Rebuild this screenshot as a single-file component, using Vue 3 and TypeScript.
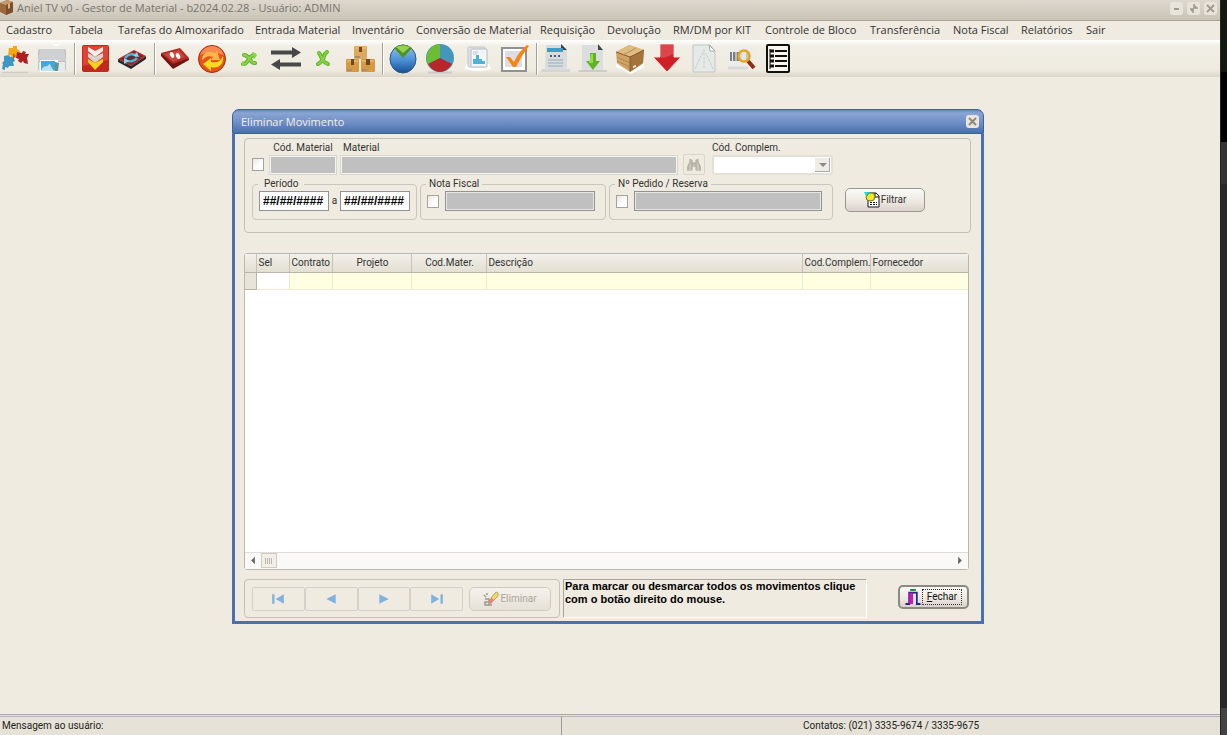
<script setup lang="ts">
import { ref } from 'vue'

interface Column {
  title: string
  width: number | null
  center: boolean
}

const menuItems: string[] = [
  'Cadastro', 'Tabela', 'Tarefas do Almoxarifado', 'Entrada Material', 'Inventário',
  'Conversão de Material', 'Requisição', 'Devolução', 'RM/DM por KIT', 'Controle de Bloco',
  'Transferência', 'Nota Fiscal', 'Relatórios', 'Sair',
]

const columns: Column[] = [
  { title: 'Sel', width: 33, center: false },
  { title: 'Contrato', width: 43, center: false },
  { title: 'Projeto', width: 79, center: true },
  { title: 'Cod.Mater.', width: 75, center: true },
  { title: 'Descrição', width: null, center: false },
  { title: 'Cod.Complem.', width: 68, center: false },
  { title: 'Fornecedor', width: 98, center: false },
]

const dateFrom = ref('##/##/####')
const dateTo = ref('##/##/####')
const useMaterial = ref(false)
const useInvoice = ref(false)
const useOrder = ref(false)
</script>

<template>
  <div class="screen">
    <div class="window">
      <header class="titlebar">
        <svg class="app-icon" viewBox="0 0 14 16" aria-hidden="true">
          <path d="M0 3 7 0 13 2 13 12 6 15 0 12Z" fill="#9a6a3c" />
          <path d="M0 3 7 0 13 2 6 5Z" fill="#c79a68" />
          <path d="M6 5 13 2V12L6 15Z" fill="#7d4f28" />
          <path d="M8 4 10 3V8L8 9Z" fill="#d8b48a" />
        </svg>
        <h1>Aniel TV v0 - Gestor de Material - b2024.02.28 - Usuário: ADMIN</h1>
        <div class="window-buttons">
          <button type="button" aria-label="Minimizar"><svg viewBox="0 0 13 13"><path d="M4 7h5" stroke="#a09a8c" stroke-width="2" /></svg></button>
          <button type="button" aria-label="Restaurar"><svg viewBox="0 0 13 13"><path d="M7 2v4h4M3 7h3v4M7 6l2-2M6 7l-2 2" fill="none" stroke="#a09a8c" stroke-width="1.6" /></svg></button>
          <button type="button" aria-label="Fechar janela"><svg viewBox="0 0 13 13"><path d="M3 3l7 7M10 3l-7 7" stroke="#a09a8c" stroke-width="1.8" /></svg></button>
        </div>
      </header>

      <nav class="menubar" aria-label="Menu principal">
        <button v-for="item in menuItems" :key="item" type="button">{{ item }}</button>
      </nav>

      <div class="toolbar" role="toolbar" aria-label="Ferramentas">
        <button type="button" aria-label="Cadastro">
          <svg viewBox="0 0 30 30">
            <path d="M2 28.500h26" stroke="#cfcdc8" stroke-width="1.500" />
            <path d="M4 12 9 11l1 2 3-1 2 5-2 1 1 4-5 0-1 2-3-1 0 3-3-1 1-5-1-1 2-2Z" fill="#3d97c4" />
            <path d="M9 4l4 0 0-2 4 0 0 3 3 2-1 4-2-1-1 4-4-1-1-2-3 1Z" fill="#f3a712" />
            <path d="M17 8l5 1 1-2 3 1-1 2 4 0-2 4 1 6-4-1-1-2-2 2-3-2 1-2-3-1Z" fill="#ad1f22" />
            <path d="M13 9l3 3-3 3" fill="#c4601a" />
          </svg>
        </button>
        <button type="button" aria-label="Imagens">
          <svg viewBox="0 0 30 30">
            <rect x="1" y="5" width="28" height="22" rx="2" fill="#bfc0c3" />
            <path d="M3 5h24l2 12H1Z" fill="#cfd0d3" />
            <path d="M17 0h5v2h-6Z" fill="#fff" />
            <rect x="2" y="18" width="26" height="10" fill="#e9eaeb" />
            <rect x="3" y="16" width="18" height="12" fill="#fff" />
            <rect x="4" y="17" width="14" height="10" fill="#48a6da" />
            <path d="M4 27c3-8 6-2 8-7 2 0 2 5 6 7Z" fill="#b9e2f4" />
            <path d="M18 18l4 1-1 8-3 0Z" fill="#5c9b86" />
          </svg>
        </button>
        <span class="separator"></span>
        <button type="button" aria-label="Entrada">
          <svg viewBox="0 0 30 30">
            <rect x="2" y="1" width="27" height="27" rx="2" fill="#c3281f" />
            <path d="M3 2h25v14L3 22Z" fill="#dc4436" />
            <path d="M8 3l7 4 8-4v4l-8 6-7-6Z" fill="#f1efed" />
            <path d="M8 9l7 4 8-4v4l-8 6-7-6Z" fill="#d9d4d0" />
            <path d="M8 15l7 4 8-4v3l-8 8-7-8Z" fill="#f6d21c" />
          </svg>
        </button>
        <button type="button" aria-label="Atualizar livro">
          <svg viewBox="0 0 30 30">
            <path d="M1 15 17 6 29 12 14 22Z" fill="#b32320" />
            <path d="M1 15 14 22 29 12 29 15 14 25 1 18Z" fill="#26282c" />
            <path d="M4 15 17 8 25 12 14 20Z" fill="#5b2f38" />
            <path d="M8 14c3-4 8-5 12-2M20 14c-3 4-8 4-12 2" fill="none" stroke="#54b5d8" stroke-width="2.500" />
            <path d="M20 8l2 5-6-1ZM7 20l0-6 5 3Z" fill="#8fd3e8" />
          </svg>
        </button>
        <span class="separator"></span>
        <button type="button" aria-label="Livro">
          <svg viewBox="0 0 30 30">
            <path d="M1 9 20 4 29 14 13 22Z" fill="#b32c24" />
            <path d="M1 9 13 20 29 14v2L13 25 1 12Z" fill="#741514" />
            <path d="M4 10 19 6 25 13 13 18Z" fill="#c7473d" />
            <ellipse cx="12" cy="11" rx="2" ry="3" fill="#fff" transform="rotate(-25 12 11)" />
            <ellipse cx="18" cy="12" rx="2" ry="3" fill="#fff" transform="rotate(-25 18 12)" />
          </svg>
        </button>
        <button type="button" aria-label="Atualizar">
          <svg viewBox="0 0 30 30">
            <circle cx="15" cy="15" r="13.500" fill="#ea5318" stroke="#9f2a12" />
            <path d="M3 11a12.500 12.500 0 0 1 24 0Q15 6 3 11Z" fill="#f88a50" />
            <path d="M5 16C5 9 12 6 18 9l2-2 3 9-9 0 2-3c-5-2-7 0-11 3Z" fill="#ffb648" />
            <path d="M26 12c1 9-5 13-12 11v4l-8-7 8-6v4c6 1 9 0 12-6Z" fill="#ffda22" />
          </svg>
        </button>
        <button type="button" aria-label="Converter">
          <svg viewBox="0 0 30 30" fill="none" stroke-linecap="round" stroke-linejoin="round">
            <path d="M10 11c6 0 6 9 11 8M9 20c5 1 6-9 11-9" stroke="#5eb32a" stroke-width="4" />
            <path d="M10 11c6 0 6 9 11 8M9 20c5 1 6-9 11-9M19 9l3 2-2 3M9 18v3" stroke="#8ad548" stroke-width="2" />
          </svg>
        </button>
        <button type="button" aria-label="Transferir">
          <svg viewBox="0 0 30 30">
            <path d="M0 6.500h21V3l9 5.500-9 5.500v-3.500H0Z" fill="#48484a" />
            <path d="M30 18.500H9V15l-9 5.500L9 26v-3.500h21Z" fill="#48484a" />
          </svg>
        </button>
        <button type="button" aria-label="Cancelar">
          <svg viewBox="0 0 30 30" fill="none" stroke-linecap="round" stroke-linejoin="round">
            <path d="M11 9c4 4 0 7 9 11M19 8c-5 3-1 8-9 12" stroke="#5eb32a" stroke-width="4" />
            <path d="M11 9c4 4 0 7 9 11M19 8c-5 3-1 8-9 12" stroke="#86d43e" stroke-width="2" />
          </svg>
        </button>
        <button type="button" aria-label="Inventário">
          <svg viewBox="0 0 30 30">
            <rect x="9" y="2" width="13" height="13" rx="1" fill="#dda95c" />
            <rect x="1" y="15" width="13" height="13" rx="1" fill="#d69a45" />
            <rect x="16" y="15" width="14" height="13" rx="1" fill="#d69a45" />
            <path d="M10 4h11M2 17h11M17 17h12" stroke="#edc98c" />
            <path d="M14 3h3v5h-3ZM6 15h3v6H6ZM21 15h4v6h-4Z" fill="#704823" />
            <path d="M10 13h5M2 26h5M17 26h5" stroke="#a98e6d" stroke-width="2" />
          </svg>
        </button>
        <span class="separator"></span>
        <button type="button" aria-label="Gráfico">
          <svg viewBox="0 0 30 30">
            <defs><linearGradient id="blueDisc" x1="0" x2="0" y1="0" y2="1"><stop stop-color="#8fc6f2" /><stop offset=".55" stop-color="#4a8fd4" /><stop offset="1" stop-color="#164f94" /></linearGradient></defs>
            <ellipse cx="15" cy="15" rx="13" ry="14" fill="url(#blueDisc)" stroke="#2a5583" />
            <path d="M6 4Q15-3 24 4L15 14Z" fill="#4f9420" />
            <path d="M8 3Q15 0 22 3L15 9Z" fill="#96d154" />
          </svg>
        </button>
        <button type="button" aria-label="Relatório gráfico">
          <svg viewBox="0 0 30 30">
            <path d="M3 28.500h24" stroke="#c9c9c9" stroke-width="2" />
            <circle cx="15" cy="14" r="14" fill="#4596bb" />
            <path d="M15 14V0A14 14 0 0 0 3 20Z" fill="#6cbd33" />
            <path d="M15 14 3 20Q8 28 15 28 23 27 27 20Z" fill="#b9262a" />
          </svg>
        </button>
        <button type="button" aria-label="Documentos">
          <svg viewBox="0 0 30 30">
            <path d="M4 20 27 20 29 25Q15 29 3 25Z" fill="#fff" />
            <rect x="6" y="3" width="17" height="20" rx="1" fill="#dfe2e4" stroke="#c3c8cb" />
            <rect x="9" y="5" width="16" height="18" rx="1" fill="#f2f5f6" stroke="#b7bec2" />
            <path d="M11 8h5M11 10h4" stroke="#c1c9cc" />
            <path d="M11 18v-3h3v-4h3v4h3v2h3v3H11Z" fill="#50b2d6" />
          </svg>
        </button>
        <button type="button" aria-label="Confirmar">
          <svg viewBox="0 0 30 30">
            <rect x="3" y="4" width="24" height="23" fill="#fff" stroke="#8f9194" stroke-width="2" />
            <rect x="6" y="7" width="17" height="16" fill="#dcdde5" />
            <path d="M7 13l4 0 4 5Q20 7 28 1l2 1Q22 12 17 23h-3Z" fill="#f58612" />
          </svg>
        </button>
        <span class="separator wide"></span>
        <button type="button" aria-label="Requisição">
          <svg viewBox="0 0 30 30">
            <path d="M1 25h28v3H0Z" fill="#d5d5d4" />
            <path d="M5 1h16l5 5v20H4Z" fill="#d9dcdf" />
            <path d="M20 0l6 6h-6Z" fill="#3d4249" />
            <path d="M6 4h16v4H6Z" fill="#3f9dc5" />
            <path d="M9 12h12" stroke="#4b5c6e" stroke-width="2" stroke-dasharray="2 2" />
            <path d="M7 16h15M7 19h15M7 22h15" stroke="#98abb9" />
          </svg>
        </button>
        <button type="button" aria-label="Baixar documento">
          <svg viewBox="0 0 30 30">
            <path d="M1 26h28v2H0Z" fill="#ccc" />
            <path d="M4 1h16l5 5v20H4Z" fill="#dcddde" />
            <path d="M20 0l5 6h-5Z" fill="#42474c" />
            <path d="M12 9h6v8h4l-7 9-7-9h4Z" fill="#5fb51f" />
            <path d="M13 10h2v9h-4" fill="#98d94f" />
          </svg>
        </button>
        <button type="button" aria-label="Caixa">
          <svg viewBox="0 0 30 30">
            <path d="M1 20 15 28 29 20v3L16 30 1 23Z" fill="#fff" />
            <path d="M1 8 14 1 29 6 28 19 15 28 2 19Z" fill="#d0a266" />
            <path d="M1 8 14 1 29 6 15 13Z" fill="#e0bb80" />
            <path d="M15 13 29 6 28 19 15 28Z" fill="#a4743c" />
            <path d="M1 8 15 13 29 6M15 13v14" fill="none" stroke="#815a30" />
            <path d="M2 13 15 19 28 12M2 17 15 23 28 16" fill="none" stroke="#9c7343" stroke-width=".6" />
            <path d="M8 11 21 4" stroke="#b88a50" />
            <path d="M18 22l3-1v2l-3 1Z" fill="#eee6d8" />
          </svg>
        </button>
        <button type="button" aria-label="Baixar">
          <svg viewBox="0 0 30 30">
            <path d="M8 0h14v13h7L15 28 1 13h7Z" fill="#cf1f27" stroke="#f6e3dd" />
            <path d="M9 1h12v9Q14 14 9 14Z" fill="#dc4549" />
          </svg>
        </button>
        <button type="button" aria-label="Novo documento">
          <svg viewBox="0 0 30 30">
            <path d="M4 1h17l5 6v21H4Z" fill="#e5e9e7" stroke="#c0c7c3" />
            <path d="M20 1l1 6h5Z" fill="#fff" stroke="#a5ada9" />
            <path d="M6 25 14 8M24 25 17 9M15 5v20" stroke="#c9d0cc" stroke-dasharray="3 1" />
          </svg>
        </button>
        <button type="button" aria-label="Consultar código">
          <svg viewBox="0 0 30 30">
            <rect x="2" y="4" width="25" height="18" fill="#ececeb" />
            <path d="M5 8v9M8 8v9M12 8v9M21 8v9" stroke="#7b7e81" stroke-width="2" />
            <path d="M10 8v9M15 8v9" stroke="#8a8d90" />
            <path d="M2 24h20" stroke="#dadada" stroke-width="3" />
            <path d="M22 17l6 7" stroke="#8b3014" stroke-width="4" />
            <circle cx="18" cy="12" r="5.500" fill="#e4e6df" fill-opacity=".7" stroke="#e6a421" stroke-width="2.500" />
          </svg>
        </button>
        <button type="button" aria-label="Lista">
          <svg viewBox="0 0 30 30">
            <rect x="4" y="1" width="22" height="27" rx="1" fill="#f7f5ee" stroke="#101010" stroke-width="2" />
            <path d="M7 5v20" stroke="#111" />
            <path d="M12 7h12M12 12h12M12 17h12M12 22h12" stroke="#111" stroke-width="2" />
            <path d="M7 7h4M7 12h4M7 17h4M7 22h4" stroke="#111" stroke-width="3" />
          </svg>
        </button>
      </div>

      <main class="workspace">
        <section class="dialog" role="dialog" aria-labelledby="dialog-title">
          <header class="dialog-title">
            <h2 id="dialog-title">Eliminar Movimento</h2>
            <button type="button" aria-label="Fechar diálogo"><svg viewBox="0 0 13 13"><path d="M3 3l7 7M10 3l-7 7" stroke="#8f8a7e" stroke-width="2" /></svg></button>
          </header>

          <div class="dialog-body">
            <form class="filters" @submit.prevent>
              <div class="filter-row">
                <input v-model="useMaterial" type="checkbox" aria-label="Filtrar por material">
                <div class="field code">
                  <label for="code">Cód. Material</label>
                  <input id="code" type="text" class="soft" disabled>
                </div>
                <div class="field material">
                  <label for="material">Material</label>
                  <input id="material" type="text" class="soft" disabled>
                </div>
                <button type="button" class="search" disabled aria-label="Procurar">
                  <svg viewBox="0 0 16 14">
                    <path d="M4 1h2v3h4V1h2v3l3 5v4h-5V9H6v4H1V9l3-5Z" fill="#c9c5b9" />
                    <path d="M4 1v3L2 8v4M6 2v10M10 2v10M12 1v3l2 4v4M6 6h4" fill="none" stroke="#a9a598" />
                  </svg>
                </button>
                <div class="field complement">
                  <label for="complement">Cód. Complem.</label>
                  <div class="combo">
                    <select id="complement" disabled><option value=""></option></select>
                    <span class="combo-arrow"></span>
                  </div>
                </div>
              </div>

              <div class="filter-row groups">
                <fieldset class="period">
                  <legend>Período</legend>
                  <div class="group-line">
                    <input v-model="dateFrom" type="text" class="date" aria-label="Data inicial">
                    <span>a</span>
                    <input v-model="dateTo" type="text" class="date" aria-label="Data final">
                  </div>
                </fieldset>
                <fieldset class="invoice">
                  <legend>Nota Fiscal</legend>
                  <div class="group-line checked">
                    <input v-model="useInvoice" type="checkbox" aria-label="Filtrar por nota fiscal">
                    <input type="text" disabled aria-label="Nota Fiscal">
                  </div>
                </fieldset>
                <fieldset class="order">
                  <legend>Nº Pedido / Reserva</legend>
                  <div class="group-line checked">
                    <input v-model="useOrder" type="checkbox" aria-label="Filtrar por pedido">
                    <input type="text" disabled aria-label="Nº Pedido / Reserva">
                  </div>
                </fieldset>
                <button type="submit" class="push filter">
                  <svg viewBox="0 0 16 16">
                    <path d="M4 1h8l3 3v11H4Z" fill="#fff" stroke="#111" />
                    <path d="M11 1v4h4" fill="none" stroke="#111" />
                    <path d="M0 0h6v3L3 6Z" fill="#14dfe6" />
                    <path d="M2 5 5 1h4l2 3-1 4-4 1-3-1Z" fill="#f0e928" stroke="#77731c" />
                    <path d="M6 10.500h7M6 12.500h7" stroke="#111" stroke-dasharray="2 1" />
                  </svg>
                  <span>Filtrar</span>
                </button>
              </div>
            </form>

            <div class="data-grid">
              <table>
                <colgroup>
                  <col class="indicator">
                  <col v-for="column in columns" :key="column.title" :style="{ width: column.width ? column.width + 'px' : 'auto' }">
                </colgroup>
                <thead>
                  <tr>
                    <th aria-label="Linha"></th>
                    <th v-for="column in columns" :key="column.title" :class="{ center: column.center }">{{ column.title }}</th>
                  </tr>
                </thead>
                <tbody>
                  <tr>
                    <td></td>
                    <td v-for="column in columns" :key="column.title"></td>
                  </tr>
                </tbody>
              </table>
              <div class="rows-area"></div>
              <div class="scrollbar">
                <button type="button" aria-label="Rolar para a esquerda"><svg viewBox="0 0 16 16"><path d="M10 4v8L6 8Z" fill="#666" /></svg></button>
                <span class="thumb"></span>
                <button type="button" class="right" aria-label="Rolar para a direita"><svg viewBox="0 0 16 16"><path d="M6 4v8l4-4Z" fill="#666" /></svg></button>
              </div>
            </div>

            <footer class="actions">
              <div class="nav-panel">
                <div class="navigator">
                  <button type="button" disabled aria-label="Primeiro"><svg viewBox="0 0 12 10"><path d="M1 1h2v8H1ZM11 1v8L4 5Z" /></svg></button>
                  <button type="button" disabled aria-label="Anterior"><svg viewBox="0 0 12 10"><path d="M10 1v8L2 5Z" /></svg></button>
                  <button type="button" disabled aria-label="Próximo"><svg viewBox="0 0 12 10"><path d="M2 1v8l8-4Z" /></svg></button>
                  <button type="button" disabled aria-label="Último"><svg viewBox="0 0 12 10"><path d="M9 1h2v8H9ZM1 1v8l7-4Z" /></svg></button>
                </div>
                <button type="button" class="push delete" disabled>
                  <svg viewBox="0 0 16 16">
                    <path d="M2 8h4v6M6 11H2v3h7M1 4l2 2M4 2v2" fill="none" stroke="#8b877d" stroke-width="1.500" />
                    <path d="M8 7 13 1l2 1v3l-5 5Z" fill="#f1d83e" stroke="#a79854" />
                    <path d="M6 9l3-2 2 2-3 4-2-1Z" fill="#e96a63" />
                  </svg>
                  <span>Eliminar</span>
                </button>
              </div>
              <p class="hint">Para marcar ou desmarcar todos os movimentos clique com o botão direito do mouse.</p>
              <button type="button" class="push close">
                <svg viewBox="0 0 16 17">
                  <path d="M5 0h6v2H5Z" fill="#148a24" />
                  <path d="M0 16h4V4h8v12h4" fill="none" stroke="#24248c" stroke-width="2" />
                  <path d="M4 4h4v12H4Z" fill="#d813b8" />
                  <path d="M9 5h2v11H9Z" fill="#c9f8fb" />
                </svg>
                <span><u>F</u>echar</span>
              </button>
            </footer>
          </div>
        </section>
      </main>

      <footer class="statusbar">
        <span>Mensagem ao usuário:</span>
        <span>Contatos: (021) 3335-9674 / 3335-9675</span>
      </footer>
    </div>
    <aside class="desktop-edge" aria-hidden="true"></aside>
  </div>
</template>

<style>
html, body { margin: 0; background: #efebe0; }
</style>

<style scoped>
* { box-sizing: border-box; }
button, input, select { margin: 0; padding: 0; font: inherit; color: inherit; border: 0; background: none; border-radius: 0; }
svg { display: block; }

.screen {
  display: flex;
  min-height: 100vh;
  font-family: "Roboto", "Liberation Sans", sans-serif;
  font-size: 10px;
  line-height: 14px;
  color: #333;
}
.window { flex: 1; min-width: 0; display: flex; flex-direction: column; background: #efebe0; }
.desktop-edge {
  width: 7px;
  background: linear-gradient(#121810 72px, #000 72px, #000 142px, #333 142px, #333 184px, #282828 184px, #282828 calc(100% - 27px), #434343 calc(100% - 27px));
  border-left: 1px solid #22241f;
}

.titlebar {
  display: flex;
  align-items: center;
  height: 21px;
  padding-bottom: 4px;
  background: linear-gradient(#ded8ce, #c9c4b7);
  border-bottom: 1px solid #aaa598;
}
.app-icon { width: 14px; height: 16px; margin-right: 3px; }
h1, h2 { margin: 0; font-family: "Open Sans", "Noto Sans", sans-serif; font-size: 11px; font-weight: 400; line-height: 16px; }
h1 { color: #77746e; }
.window-buttons { display: flex; gap: 4px; margin-left: auto; margin-right: 3px; }
.window-buttons button { width: 13px; height: 13px; background: #e8e4dc; border-radius: 3px; }

.menubar {
  display: grid;
  grid-template-columns: 63px 49px 137px 97px 64px 124px 67px 66px 92px 105px 83px 68px 65px auto;
  height: 19px;
  padding: 0 0 2px 6px;
  font-family: "Open Sans", "Noto Sans", sans-serif;
  font-size: 11px;
}
.menubar button { text-align: left; white-space: nowrap; }

.toolbar {
  display: flex;
  align-items: flex-start;
  height: 37px;
  padding-top: 4px;
  background: linear-gradient(#fff, #f1eee5 6px, #efebe0 30px, #dcd6ca 37px);
}
.toolbar button { flex: none; width: 30px; height: 30px; margin-right: 7px; }
.separator { flex: none; width: 2px; height: 32px; margin-right: 4px; margin-top: -1px; border-left: 1px solid #a3a099; border-right: 1px solid #fff; }
.separator.wide { margin-right: 3px; }

.workspace { flex: 1; padding: 32px 4px 32px 0; }
.dialog { width: 100%; max-width: 752px; margin: 0 auto; }
.dialog-title {
  display: flex;
  align-items: center;
  justify-content: space-between;
  height: 25px;
  padding: 0 4px 0 8px;
  color: #f4efe4;
  background: linear-gradient(#6485bd, #8aa5d3 3px, #7090c8 12px, #4a70ae);
  border: 1px solid #3e609e;
  border-radius: 7px 7px 0 0;
}
.dialog-title button { width: 13px; height: 13px; background: #ebe6dd; border-radius: 3px; }
.dialog-body { padding: 4px 10px 3px 9px; border: solid #4a70ae; border-width: 0 3px 3px; }

.filters { height: 95px; padding: 2px 7px 0; border: 1px solid #c3c0b6; border-radius: 4px; }
.filter-row { display: flex; align-items: flex-end; padding-right: 130px; }
.filter-row > input[type="checkbox"] { margin: 0 5px 4px 0; }
.field { display: flex; flex-direction: column; }
.field.code { width: 68px; margin-right: 3px; }
.field.code label { text-align: center; }
.field.material { flex: 1; min-width: 0; }
.field.material label { padding-left: 3px; }
.field.complement { width: 121px; }
label { white-space: nowrap; }

input[type="text"] { min-width: 0; width: 100%; height: 20px; background: #c0c0c0; border: 1px solid #8f9299; box-shadow: inset 0 0 0 1px #e9e7e0; }
input[type="text"].soft { border-color: #d9d6cd; box-shadow: inset 0 0 0 1px #f6f4ee; }
input[type="text"].date { width: 70px; padding: 0 3px; background: #fff; color: #000; font-family: "Liberation Sans", sans-serif; font-size: 12px; font-weight: 700; box-shadow: none; }
input[type="checkbox"] { appearance: none; flex: none; width: 12px; height: 13px; background: linear-gradient(135deg, #ece5d9, #fff 60%); border: 1px solid #a5a39c; }
.search { flex: none; width: 22px; height: 21px; margin: 0 7px 0 5px; border: 1px solid #d9d6cc; border-radius: 2px; }
.search svg { width: 16px; height: 14px; margin: auto; }
.combo { position: relative; height: 20px; }
.combo select { appearance: none; width: 100%; height: 20px; background: #fff; border: 2px solid #e3e0d7; border-radius: 3px; opacity: 1; }
.combo-arrow { position: absolute; top: 3px; right: 3px; width: 15px; height: 14px; background: #f0ede6; border-right: 1px solid #aaa; border-bottom: 1px solid #aaa; pointer-events: none; }
.combo-arrow::after { content: ""; position: absolute; left: 4px; top: 5px; border: solid transparent; border-width: 4px 4px 0; border-top-color: #8c8c8c; }

.filter-row.groups { align-items: flex-start; gap: 3px; padding-right: 0; padding-top: 2px; }
fieldset { flex: none; min-width: 0; height: 43px; margin: 0; padding: 0 6px; border: 1px solid #c9c6bb; border-radius: 4px; }
legend { height: 14px; margin-left: -1px; padding: 0 6px; white-space: nowrap; }
fieldset.invoice legend, fieldset.order legend { padding: 0 3px; }
.period { width: 165px; }
.invoice { width: 186px; }
.order { width: 224px; }
.group-line { display: flex; align-items: center; justify-content: space-between; }
.group-line.checked { gap: 6px; padding-right: 4px; }

.push {
  display: flex;
  flex: none;
  align-items: center;
  justify-content: center;
  gap: 1px;
  height: 24px;
  background: linear-gradient(#fbfaf7, #ece7df 60%, #d9d2ca);
  border: 1px solid #9b978f;
  border-radius: 5px;
}
.push svg { width: 16px; height: 16px; flex: none; }
.push.filter { width: 80px; margin: 11px 0 0 9px; }

.data-grid { height: 317px; margin: 20px 2px 9px 0; display: flex; flex-direction: column; background: #fff; border: 1px solid #bbb8af; border-radius: 3px; }
table { width: 100%; table-layout: fixed; border-collapse: collapse; }
col.indicator { width: 11px; }
th { height: 18px; padding: 0 0 0 2px; text-align: left; font-weight: 400; white-space: nowrap; background: linear-gradient(#f2f0e9, #e3dfd3); border-right: 1px solid #c7c3b8; border-bottom: 1px solid #b9b5aa; }
th.center { text-align: center; }
td { height: 17px; padding: 0; background: #ffffe1; border-right: 1px solid #ebe9d6; border-bottom: 1px solid #efedda; }
th:last-child, td:last-child { border-right: 0; }
td:first-child { background: #e8e4d9; border-color: #b9b5aa; }
td:nth-child(2) { background: #fff; }
.rows-area { flex: 1; }
.scrollbar { display: flex; height: 17px; background: #fbf8f8; border-top: 1px solid #e0dcdc; }
.scrollbar button { width: 16px; height: 15px; }
.scrollbar svg { width: 16px; height: 15px; }
.scrollbar .right { margin-left: auto; }
.thumb { width: 16px; height: 15px; border: 1px solid #d0cbc0; background: repeating-linear-gradient(90deg, #b9b5ad 0 1px, transparent 1px 2px) center / 8px 6px no-repeat, #f2efe8; }

.actions { display: flex; align-items: flex-start; margin-right: 2px; }
.nav-panel { display: flex; align-items: center; width: 316px; height: 39px; padding: 0 8px 0 7px; border: 1px solid #c3c0b6; border-radius: 4px; }
.navigator { display: flex; flex: 1; }
.navigator button { flex: 1; height: 24px; border: 1px solid #d2d1cc; border-radius: 2px; }
.navigator svg { width: 14px; height: 12px; margin: auto; fill: #7fb2e2; }
.push.delete { width: 82px; margin-left: 6px; color: #aaa69b; border-color: #cfcbc2; background: linear-gradient(#f5f2eb, #e6e1d7); }
.push.delete svg { opacity: .8; }
.hint { width: 304px; height: 39px; margin: 0 0 0 3px; padding: 0 1px; font-size: 11px; font-weight: 700; line-height: 13px; color: #000; font-family: "Liberation Sans", sans-serif; border: 1px solid #fff; border-top-color: #a7a59d; border-left-color: #a7a59d; }
.push.close { width: 71px; margin: 6px 0 0 auto; gap: 1px; color: #111; border: 2px solid #8d8a84; }
.push.close span { padding: 0 4px; border: 1px dotted #333; }

.statusbar { display: grid; grid-template-columns: 46% 54%; height: 21px; color: #222; background: #e6e2d7; border-top: 1px solid #aaa7aa; }
.statusbar span { padding: 2px 2px 0; border-top: 1px solid #b8b5b8; margin-top: 1px; }
.statusbar span + span { text-align: center; border-left: 1px solid #999; }
</style>
